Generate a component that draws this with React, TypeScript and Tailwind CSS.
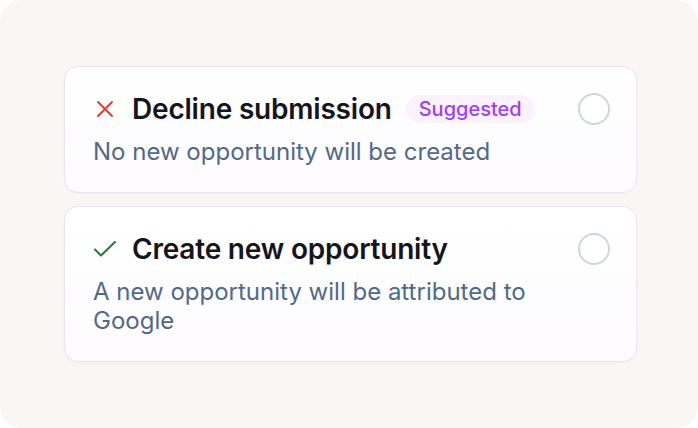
import { ReactNode } from "react";

type Option = {
  title: string;
  description: string;
  icon: ReactNode;
  badge?: string;
};

const options: Option[] = [
  {
    title: "Decline submission",
    description: "No new opportunity will be created",
    icon: (
      <svg width="18" height="18" viewBox="0 0 18 18" fill="none" stroke="#e0412f" strokeWidth="2" strokeLinecap="round">
        <path d="M2 2 16 16M16 2 2 16" />
      </svg>
    ),
    badge: "Suggested",
  },
  {
    title: "Create new opportunity",
    description: "A new opportunity will be attributed to Google",
    icon: (
      <svg width="24" height="18" viewBox="0 0 24 18" fill="none" stroke="#1d7a3e" strokeWidth="2" strokeLinecap="round" strokeLinejoin="round">
        <path d="M2 9.5 8 15.5 22 2" />
      </svg>
    ),
  },
];

function OptionCard({ option }: { option: Option }) {
  return (
    <div className="flex items-start justify-between gap-4 rounded-[14px] border border-[#e9e5ea] bg-[linear-gradient(180deg,#ffffff,#fdfbfe)] pb-[25px] pl-[28px] pr-[26px] pt-[26px] shadow-[0_1px_2px_rgba(30,20,40,0.03)]">
      <div className="flex min-w-0 flex-col gap-[12px]">
        <div className="flex h-[32px] items-center">
          <span className="flex w-[24px] items-center justify-center">{option.icon}</span>
          <span className="ml-[15px] text-[28px] font-semibold leading-[32px] tracking-[-0.2px] text-[#15151e]">
            {option.title}
          </span>
          {option.badge ? (
            <span className="ml-[14px] rounded-full bg-[#fbf2ff] px-[13px] py-[2px] text-[20px] font-medium leading-[24px] text-[#a23ef0]">
              {option.badge}
            </span>
          ) : null}
        </div>
        <p className="text-[24px] leading-[29.5px] text-[#52688b]">{option.description}</p>
      </div>
      <div className="h-[32px] w-[32px] shrink-0 rounded-full border-2 border-[#cfd4e1] bg-white" />
    </div>
  );
}

export default function App() {
  return (
    <div className="h-[428px] w-[698px] bg-white font-['Inter',sans-serif]">
      <div className="flex h-full w-full flex-col gap-[13px] rounded-[22px] bg-[#f9f6f5] pl-[64px] pr-[61px] pt-[66px]">
        {options.map((option) => (
          <OptionCard key={option.title} option={option} />
        ))}
      </div>
    </div>
  );
}
